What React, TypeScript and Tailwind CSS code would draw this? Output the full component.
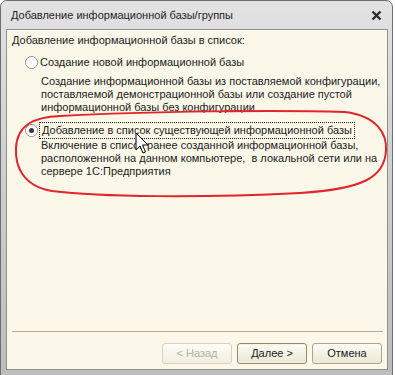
import React from "react";

const font = { fontFamily: '"Liberation Sans", Arial, sans-serif' };

function Radio({ checked }: { checked?: boolean }) {
  return (
    <div className="w-[13px] h-[13px] rounded-full border border-[#8a8a8a] bg-gradient-to-br from-[#dcdcdc] to-[#ffffff] flex items-center justify-center shrink-0">
      <div className="w-[11px] h-[11px] rounded-full bg-gradient-to-br from-[#f4f4f4] to-[#ffffff] flex items-center justify-center">
        {checked && <div className="w-[5px] h-[5px] rounded-full bg-[#3a3a3a]" />}
      </div>
    </div>
  );
}

export default function App() {
  return (
    <div className="relative w-[395px] h-[375px] bg-white overflow-hidden" style={font}>
      <div className="w-[393px] h-[376px] rounded-t-[7px] border border-[#6e6e6e] bg-gradient-to-b from-[#e2e2e2] via-[#cdcdcd] to-[#bdbdbd] flex flex-col pl-[5px] pr-[4px] pb-[5px]">
        <div className="h-[28px] flex items-center justify-between pl-[5px] pr-[4px]">
          <span className="text-[11px] text-[#1e1e1e] whitespace-nowrap">Добавление информационной базы/группы</span>
          <svg width="11" height="11" viewBox="0 0 11 11" className="mr-[2px]">
            <path d="M1.5 1.5 L9.5 9.5 M9.5 1.5 L1.5 9.5" stroke="#2e2e2e" strokeWidth="2.4" />
          </svg>
        </div>
        <div className="flex-1 border border-[#8f8f8f] bg-[#fbf8e9] flex flex-col text-[11px] leading-[13px] text-[#222] whitespace-nowrap">
          <div className="pt-[4px] pl-[5px]">Добавление информационной базы в список:</div>
          <div className="mt-[7px] h-[17px] flex items-center pl-[18px]">
            <Radio />
            <span className="ml-[2px]">Создание новой информационной базы</span>
          </div>
          <div className="mt-[4px] pl-[34px]">
            <div>Создание информационной базы из поставляемой конфигурации,</div>
            <div>поставляемой демонстрационной базы или создание пустой</div>
            <div>информационной базы без конфигурации</div>
          </div>
          <div className="mt-[8px] h-[17px] flex items-center pl-[18px]">
            <Radio checked />
            <span className="ml-[1px] h-[17px] px-[2px] flex items-center border border-dotted border-[#222]">
              Добавление в список существующей информационной базы
            </span>
          </div>
          <div className="pl-[34px]">
            <div>Включение в список ранее созданной информационной базы,</div>
            <div>расположенной на данном компьютере,&nbsp; в локальной сети или на</div>
            <div>сервере 1С:Предприятия</div>
          </div>
          <div className="flex-1" />
          <div className="ml-[5px] mr-[4px] h-[1px] bg-[#b3ae93]" />
          <div className="mt-[11px] mb-[5px] flex justify-end gap-[5px] pr-[5px]">
            <div className="w-[70px] h-[21px] rounded-[3px] border border-[#d6d2bf] bg-gradient-to-b from-[#fdfcf7] to-[#f2efe0] flex items-center justify-center text-[#b4b0a0]">
              &lt; Назад
            </div>
            <div className="w-[70px] h-[21px] rounded-[3px] border border-[#8f8a70] bg-gradient-to-b from-[#fdfcf6] to-[#ebe7d3] flex items-center justify-center shadow-[inset_0_0_0_1px_#f4f1e0]">
              Далее &gt;
            </div>
            <div className="w-[70px] h-[21px] rounded-[3px] border border-[#aaa58c] bg-gradient-to-b from-[#fdfcf6] to-[#ebe7d3] flex items-center justify-center">
              Отмена
            </div>
          </div>
        </div>
      </div>
      <svg className="absolute inset-0 pointer-events-none" width="395" height="375" viewBox="0 0 395 375">
        <path
          d="M60 116 C150 111, 280 110, 345 112 C378 116, 387 135, 386 150 C385 178, 362 189, 300 193 C200 198, 100 197, 52 191 C22 186, 15 165, 16 148 C17 125, 34 117, 60 116 Z"
          fill="none"
          stroke="#e3242b"
          strokeWidth="2"
        />
        <path
          d="M136 133 L136 150 L140 146 L143 153 L145.5 152 L142.5 145 L148 145 Z"
          fill="#ffffff"
          stroke="#000000"
          strokeWidth="1"
          strokeLinejoin="miter"
        />
      </svg>
    </div>
  );
}
